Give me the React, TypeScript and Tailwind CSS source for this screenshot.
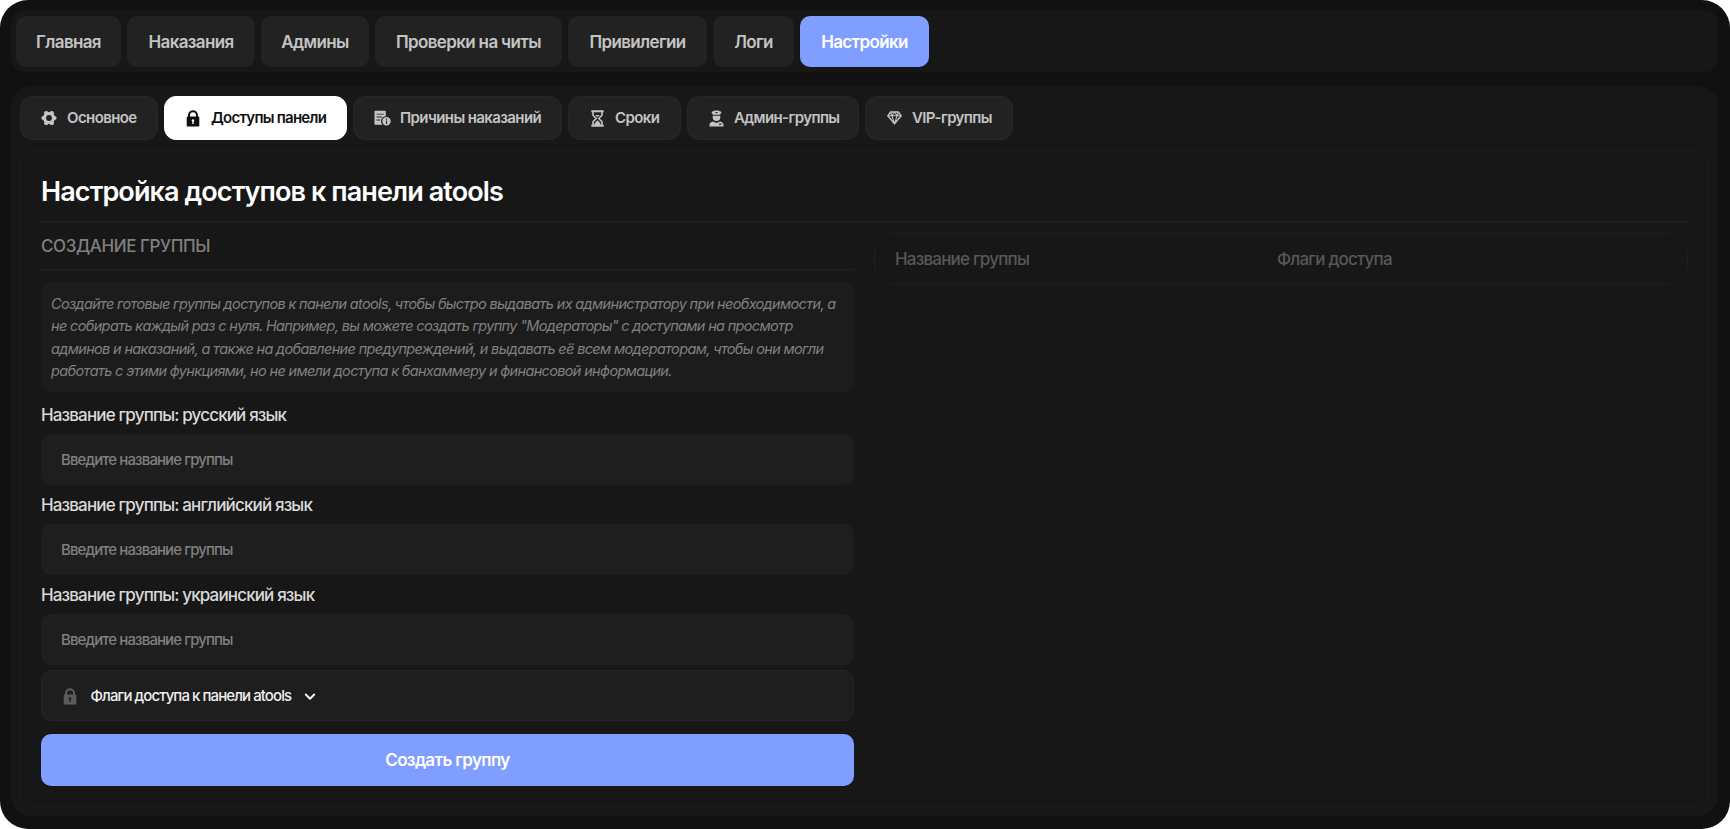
import { ReactNode } from "react";

const GearIcon = () => (
  <svg width="16" height="16" viewBox="0 0 16 16" fill="currentColor">
    <circle cx="8" cy="8" r="4.500" fill="none" stroke="currentColor" strokeWidth="3.200" />
    <circle cx="13.500" cy="8" r="2.100" />
    <circle cx="2.500" cy="8" r="2.100" />
    <circle cx="10.800" cy="3.100" r="2.200" />
    <circle cx="5.200" cy="3.100" r="2.200" />
    <circle cx="10.800" cy="12.900" r="2.200" />
    <circle cx="5.200" cy="12.900" r="2.200" />
  </svg>
);

const LockIcon = () => (
  <svg width="14" height="17" viewBox="0 0 14 17" fill="currentColor">
    <path
      fillRule="evenodd"
      d="M2 6.5V5.2a5 5 0 0 1 10 0v1.3h.3c.6 0 1 .4 1 1v8c0 .6-.4 1-1 1H1.700c-.6 0-1-.4-1-1v-8c0-.6.4-1 1-1zM4 6.500h6V5.200a3 3 0 0 0-6 0zM7 9.300a1.300 1.300 0 0 0-.7 2.400V14h1.400v-2.300A1.300 1.300 0 0 0 7 9.300z"
    />
  </svg>
);

const ReasonsIcon = () => (
  <svg width="17" height="16" viewBox="0 0 17 16" fill="currentColor">
    <path
      fillRule="evenodd"
      d="M1.500.8h9.300c.6 0 1 .4 1 1v4.400a4.900 4.900 0 0 0-3 8.600H1.500c-.6 0-1-.4-1-1v-12c0-.6.4-1 1-1zM2.500 3.700v.9h7.300v-.9zM2.500 6.600v.9h5.500v-.9zM2.500 9.500v.9h3.700v-.9z"
    />
    <path
      fillRule="evenodd"
      d="M12.500 7a4.200 4.200 0 1 1 0 8.400 4.200 4.200 0 0 1 0-8.400zM12 8.500v1.200h1.100V8.500zM12 10.600V14h1.100v-3.400z"
    />
  </svg>
);

const HourglassIcon = () => (
  <svg width="13" height="17" viewBox="0 0 13 17" fill="none" stroke="currentColor" strokeWidth="1.600">
    <path d="M.3 1.200h12.400M.3 15.800h12.400" strokeWidth="2" />
    <path d="M2 1.500v3.700l3.200 3.300L2 11.800v3.700M11 1.500v3.700L7.800 8.500l3.200 3.300v3.700" />
    <path d="M6.500 10.300l3 3.200v1.800h-6v-1.800zM4.300 5h4.400L6.500 7.300z" fill="currentColor" stroke="none" />
  </svg>
);

const AdminIcon = () => (
  <svg width="15" height="17" viewBox="0 0 15 17" fill="currentColor">
    <path d="M7.500.4C9.500.4 11.300 1 12.600 2l-1.300 2.200v.6H3.700v-.6L2.400 2C3.700 1 5.500.4 7.500.4z" />
    <path d="M3.700 5.700h7.600v1.500a3.800 3.800 0 0 1-7.600 0z" />
    <path
      fillRule="evenodd"
      d="M4 11.500l3.500 1.400 3.500-1.400c2.200.5 3.500 1.600 3.500 3.200v1.800H.5v-1.800c0-1.600 1.300-2.700 3.500-3.200zM10 13.600v1.200h2.500v-1.200z"
    />
    <path d="M6.300 2.600h2.400" stroke="#222" strokeWidth="1" />
  </svg>
);

const DiamondIcon = () => (
  <svg width="15" height="14" viewBox="0 0 15 14" fill="none" stroke="currentColor" strokeWidth="1.400" strokeLinejoin="round">
    <path d="M3.600 1h7.800L14.200 4.800 7.500 12.700.8 4.800z" />
    <path d="M.8 4.800h13.400M3.600 1l1.300 3.800 2.600 7.900 2.600-7.900L11.400 1M4.900 4.800L7.500 1l2.600 3.800" strokeWidth="1.100" />
  </svg>
);

const ChevronIcon = () => (
  <svg width="12" height="8" viewBox="0 0 12 8" fill="none" stroke="currentColor" strokeWidth="2" strokeLinecap="round" strokeLinejoin="round">
    <path d="M1.800 1.500L6 5.800l4.200-4.300" />
  </svg>
);

const mainTabs = [
  { label: "Главная", width: "w-[105px]" },
  { label: "Наказания", width: "w-[128px]" },
  { label: "Админы", width: "w-[108px]" },
  { label: "Проверки на читы", width: "w-[187px]" },
  { label: "Привилегии", width: "w-[139px]" },
  { label: "Логи", width: "w-[81px]" },
  { label: "Настройки", width: "w-[129px]", active: true },
];

const subTabs = [
  { label: "Основное", width: "w-[138px]", icon: <GearIcon /> },
  { label: "Доступы панели", width: "w-[183px]", icon: <LockIcon />, active: true },
  { label: "Причины наказаний", width: "w-[209px]", icon: <ReasonsIcon /> },
  { label: "Сроки", width: "w-[113px]", icon: <HourglassIcon /> },
  { label: "Админ-группы", width: "w-[172px]", icon: <AdminIcon /> },
  { label: "VIP-группы", width: "w-[148px]", icon: <DiamondIcon /> },
];

const fields = ["русский язык", "английский язык", "украинский язык"];

const infoLines = [
  "Создайте готовые группы доступов к панели atools, чтобы быстро выдавать их администратору при необходимости, а",
  "не собирать каждый раз с нуля. Например, вы можете создать группу \"Модераторы\" с доступами на просмотр",
  "админов и наказаний, а также на добавление предупреждений, и выдавать её всем модераторам, чтобы они могли",
  "работать с этими функциями, но не имели доступа к банхаммеру и финансовой информации.",
];

const SubTab = ({ label, width, icon, active }: { label: string; width: string; icon: ReactNode; active?: boolean }) => (
  <button
    className={`${width} flex h-11 shrink-0 items-center rounded-[12px] border pl-[19.500px] text-[15px] font-semibold whitespace-nowrap ${
      active
        ? "border-white bg-white tracking-[-0.75px] text-[#111]"
        : "border-[#272727] bg-[#222] tracking-[-0.6px] text-[#c4c4c4]"
    }`}
  >
    <span className="flex w-[17px] shrink-0 justify-center">{icon}</span>
    <span className="ml-[9.500px]">{label}</span>
  </button>
);

const App = () => {
  return (
    <div className="h-[829px] w-[1730px] overflow-hidden bg-white font-['Inter','Liberation_Sans',sans-serif]">
      <div className="flex h-full flex-col gap-3.5 rounded-[28px] bg-[#111] pt-2.5 pr-3 pb-[13px] pl-[11px]">
        <nav className="flex h-[62px] shrink-0 items-center gap-1.5 rounded-[14px] bg-[#171717] px-[5px]">
          {mainTabs.map((tab) => (
            <button
              key={tab.label}
              className={`${tab.width} h-[51px] shrink-0 rounded-[10px] pt-[3px] text-[17px] font-semibold tracking-[-0.65px] whitespace-nowrap ${
                tab.active ? "bg-[#7f9eff] text-white" : "bg-[#222] text-[#c4c4c4]"
              }`}
            >
              {tab.label}
            </button>
          ))}
        </nav>

        <main className="flex grow flex-col rounded-[20px] bg-[#171717] px-[9px] pt-2.5 pb-[9px]">
          <div className="flex gap-1.5">
            {subTabs.map((tab) => (
              <SubTab key={tab.label} {...tab} />
            ))}
          </div>

          <section className="mt-2.5 grow rounded-[14px] border border-[#1e1e1e] px-5">
            <h1 className="flex h-[72px] items-center border-b-2 border-[#1d1d1d] pt-3 text-[27px] font-semibold tracking-[-0.9px] text-white">
              Настройка доступов к панели atools
            </h1>

            <div className="flex gap-5">
              <div className="w-[813px] shrink-0">
                <h2 className="flex h-[47px] items-center border-b border-[#212121] pt-0.5 text-[17px] font-medium tracking-[-0.4px] text-[#808080]">
                  СОЗДАНИЕ ГРУППЫ
                </h2>
                <div className="mt-3 h-[110px] rounded-[10px] bg-[#1c1c1c] px-2.5 pt-[11px] text-[14.5px] leading-[22.4px] tracking-[-0.66px] whitespace-nowrap text-[#808080] italic">
                  {infoLines.map((line) => (
                    <p key={line}>{line}</p>
                  ))}
                </div>

                <div className="mt-[5px]">
                  {fields.map((field) => (
                    <label key={field} className="mb-0.5 block text-[17px] font-[450] tracking-[-0.85px] text-[#dadada]">
                      <span className="flex h-[37px] items-center pt-px">Название группы: {field}</span>
                      <input
                        className="block h-[51px] w-full rounded-[10px] bg-[#1e1e1e] px-5 text-[15px] tracking-[-0.9px] placeholder:text-[#808080]"
                        placeholder="Введите название группы"
                      />
                    </label>
                  ))}
                </div>

                <button className="mt-[5px] flex h-[51px] w-full items-center rounded-[10px] border border-[#242424] bg-[#1e1e1e] pt-px pl-[21px] text-[15px] font-medium tracking-[-0.92px] text-[#f0f0f0]">
                  <span className="mr-[13.500px] text-[#5c5c5c]">
                    <LockIcon />
                  </span>
                  Флаги доступа к панели atools
                  <span className="ml-[13px] pt-px">
                    <ChevronIcon />
                  </span>
                </button>
                <button className="mt-[13px] h-[52px] w-full rounded-[10px] bg-[#7f9eff] pt-0.5 text-[17px] font-semibold tracking-[-0.65px] text-white">
                  Создать группу
                </button>
              </div>

              <div className="mt-2.5 grid h-[52px] grow grid-cols-[382px_1fr] items-center rounded-[20px] border border-[#1f1f1f] pt-px pl-5 text-[17px] font-[450] tracking-[-0.8px] text-[#585858]">
                <span>Название группы</span>
                <span>Флаги доступа</span>
              </div>
            </div>
          </section>
        </main>
      </div>
    </div>
  );
};

export default App;
